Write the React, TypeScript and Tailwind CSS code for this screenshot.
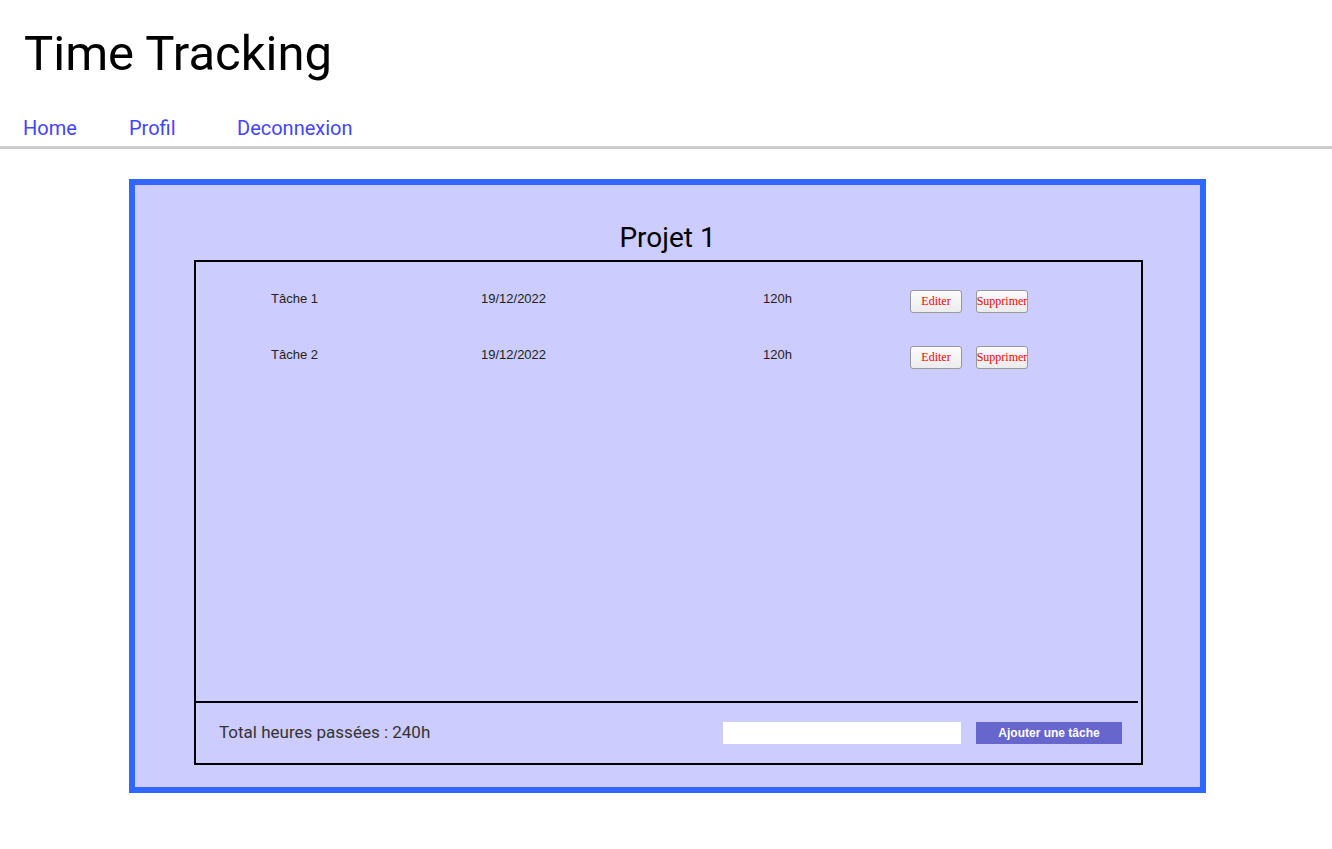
const tasks = [
  { name: "Tâche 1", date: "19/12/2022", hours: "120h" },
  { name: "Tâche 2", date: "19/12/2022", hours: "120h" },
]

function TaskRow({ name, date, hours }: { name: string; date: string; hours: string }) {
  return (
    <div className="flex items-start h-[23px] pl-[75px] text-[13px] leading-[15px] text-[#222] font-['Liberation_Sans',Arial,sans-serif]">
      <span className="w-[210px] mt-px">{name}</span>
      <span className="w-[282px] mt-px">{date}</span>
      <span className="w-[147px] mt-px">{hours}</span>
      <button className="w-[52px] h-[23px] p-0 rounded-[3px] border border-[#999] bg-gradient-to-b from-[#fbfbfb] to-[#ececec] text-[12px] text-[#ff0000] font-['Liberation_Serif','Times_New_Roman',serif] whitespace-nowrap flex items-center justify-center">
        Editer
      </button>
      <button className="ml-[14px] w-[52px] h-[23px] p-0 rounded-[3px] border border-[#999] bg-gradient-to-b from-[#fbfbfb] to-[#ececec] text-[12px] text-[#ff0000] font-['Liberation_Serif','Times_New_Roman',serif] whitespace-nowrap flex items-center justify-center">
        Supprimer
      </button>
    </div>
  )
}

export default function App() {
  return (
    <div className="min-h-[849px] bg-white font-['Roboto',sans-serif]">
      <header className="pl-6 pt-[26px]">
        <h1 className="text-[49px] leading-[56px] text-black">Time Tracking</h1>
      </header>

      <nav className="mt-[34px] pb-[6px] border-b-[3px] border-[#cccccc] flex text-[20px] leading-6 text-[#4444ff]">
        <a className="ml-[23px] w-[106px]" href="#">Home</a>
        <a className="w-[108px]" href="#">Profil</a>
        <a href="#">Deconnexion</a>
      </nav>

      <main className="ml-[129px] mt-[30px] w-[1077px] h-[614px] border-[6px] border-[#3366ff] bg-[#ccccff] flex flex-col">
        <h2 className="pt-[37px] text-center text-[28px] leading-8 text-black">Projet 1</h2>

        <div className="mt-[6px] ml-[59px] w-[949px] h-[505px] border-2 border-black flex flex-col">
          <div className="h-[441px] mr-[3px] border-b-2 border-black pt-[28px] flex flex-col gap-[33px]">
            {tasks.map((t) => (
              <TaskRow key={t.name} {...t} />
            ))}
          </div>

          <div className="flex-1 flex items-center pl-[23px] pr-[19px]">
            <span className="text-[17px] text-[#333]">Total heures passées : 240h</span>
            <input className="ml-auto w-[238px] h-[22px] bg-white outline-none border-0" type="text" />
            <button className="ml-[15px] w-[146px] h-[22px] bg-[#6666cc] text-white text-[12px] font-bold font-['Liberation_Sans',Arial,sans-serif]">
              Ajouter une tâche
            </button>
          </div>
        </div>
      </main>
    </div>
  )
}
